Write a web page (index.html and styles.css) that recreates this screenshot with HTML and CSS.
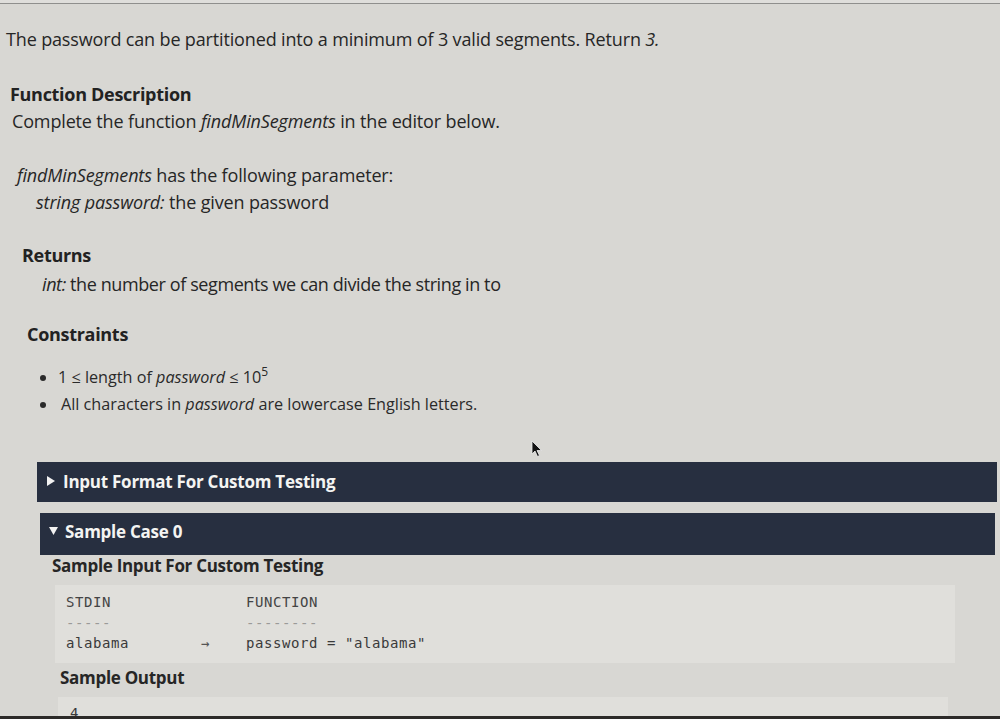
FILE: index.html
```html
<!DOCTYPE html>
<html lang="en">
<head>
<meta charset="utf-8">
<title>findMinSegments</title>
<link rel="stylesheet" href="styles.css">
</head>
<body>
<div class="topline"></div>
<main class="page">
  <p class="text p1">The password can be partitioned into a minimum of 3 valid segments. Return <em>3.</em></p>

  <h3 class="head h-fd">Function Description</h3>
  <p class="text p-complete">Complete the function <em>findMinSegments</em> in the editor below.</p>

  <p class="text p-has"><em>findMinSegments</em> has the following parameter:</p>
  <p class="text p-param"><em>string password:</em> the given password</p>

  <h3 class="head h-ret">Returns</h3>
  <p class="text p-int"><em>int:</em> the number of segments we can divide the string in to</p>

  <h3 class="head h-con">Constraints</h3>
  <ul class="bullets">
    <li>1 ≤ length of <em>password</em> ≤ 10<sup>5</sup></li>
    <li class="b2">All characters in <em>password</em> are lowercase English letters.</li>
  </ul>

  <div class="bar bar1">
    <svg class="tri" width="10" height="12" viewBox="0 0 10 12"><polygon points="1,1 9,6 1,11" fill="#f2f2f2"/></svg>
    <span>Input Format For Custom Testing</span>
  </div>

  <div class="bar bar2">
    <svg class="tri" width="11" height="10" viewBox="0 0 11 10"><polygon points="1,1 10,1 5.5,9" fill="#f2f2f2"/></svg>
    <span>Sample Case 0</span>
  </div>

  <h4 class="sub s-in">Sample Input For Custom Testing</h4>
  <pre class="code code1"><span class="c">STDIN               FUNCTION</span>
<span class="dash">-----               --------</span>
alabama        <span class="arr">→</span>    password = "alabama"</pre>

  <h4 class="sub s-out">Sample Output</h4>
  <pre class="code code2">4</pre>
</main>
<svg class="cursor" width="12" height="18" viewBox="0 0 12 18"><polygon points="1,1 1,14 4,11 6.5,16.5 8.5,15.5 6,10.5 10.5,10.5" fill="#111" stroke="#eee" stroke-width="0.8"/></svg>
<div class="bottomline"></div>
</body>
</html>
```

FILE: styles.css
```css
html, body {
  margin: 0;
  padding: 0;
}
body {
  width: 1000px;
  height: 719px;
  overflow: hidden;
  position: relative;
  background: #d8d7d3;
  font-family: "Open Sans", "Noto Sans", sans-serif;
  color: #262626;
}
.topline {
  height: 3px;
  background: #dfdedb;
  border-bottom: 1px solid #8f8f8d;
}
.page {
  display: flex;
  flex-direction: column;
  align-items: flex-start;
}
.text {
  margin: 0;
  font-size: 18px;
  line-height: 27px;
  letter-spacing: -0.15px;
  white-space: nowrap;
}
.text em { font-style: italic; }
.head {
  margin: 0;
  font-size: 18px;
  line-height: 27px;
  font-weight: 700;
  letter-spacing: -0.3px;
  color: #222;
}
.p1 { margin-top: 22px; padding-left: 6px; }
.h-fd { margin-top: 28px; padding-left: 10px; }
.p-complete { padding-left: 12px; }
.p-has { margin-top: 27px; padding-left: 17px; }
.p-param { padding-left: 36px; }
.h-ret { margin-top: 26px; padding-left: 22px; }
.p-int { margin-top: 2px; padding-left: 42px; letter-spacing: -0.4px; }
.h-con { margin-top: 23px; padding-left: 27px; }

.bullets {
  margin: 16px 0 0 0;
  padding-left: 58px;
  font-size: 16.2px;
  line-height: 27px;
  letter-spacing: 0;
  color: #2a2a2a;
}
.bullets li { list-style: disc; }
.bullets li::marker { font-size: 16px; }
.bullets .b2 { padding-left: 3px; }
.bullets sup { font-size: 12px; line-height: 0; vertical-align: 7px; }

.bar {
  display: flex;
  align-items: center;
  gap: 7px;
  background: #272f40;
  color: #f4f4f2;
  font-weight: 700;
  font-size: 17px;
  letter-spacing: -0.25px;
  box-sizing: border-box;
}
.bar1 {
  margin-top: 44px;
  margin-left: 37px;
  width: 960px;
  height: 40px;
  padding-left: 9px;
  padding-bottom: 2px;
}
.bar2 {
  margin-top: 11px;
  margin-left: 40px;
  width: 955px;
  height: 42px;
  padding-left: 8px;
  padding-bottom: 6px;
  gap: 6px;
}
.tri { flex: none; }

.sub {
  margin: 0;
  font-size: 17px;
  line-height: 22px;
  font-weight: 700;
  letter-spacing: -0.3px;
  color: #262626;
}
.s-in { padding-left: 52px; }
.s-out { margin-top: 4px; padding-left: 60px; }

.code {
  margin: 8px 0 0 0;
  background: #e0dfdb;
  font-family: "DejaVu Sans Mono", "Liberation Mono", monospace;
  font-size: 14px;
  letter-spacing: 0.57px;
  color: #3a3a3a;
  box-sizing: border-box;
}
.code1 {
  margin-left: 55px;
  width: 900px;
  height: 78px;
  padding: 7px 0 0 11px;
  line-height: 20.5px;
}
.code .c { color: #444; }
.code .dash { color: #9a9a98; }
.code .arr { color: #555; }
.code2 {
  margin-left: 58px;
  width: 890px;
  height: 40px;
  padding: 6px 0 0 12px;
  line-height: 20px;
}
.cursor {
  position: absolute;
  left: 531px;
  top: 440px;
}
.bottomline {
  position: absolute;
  left: 0;
  bottom: 0;
  width: 1000px;
  height: 3px;
  background: #2c2a28;
}
```
